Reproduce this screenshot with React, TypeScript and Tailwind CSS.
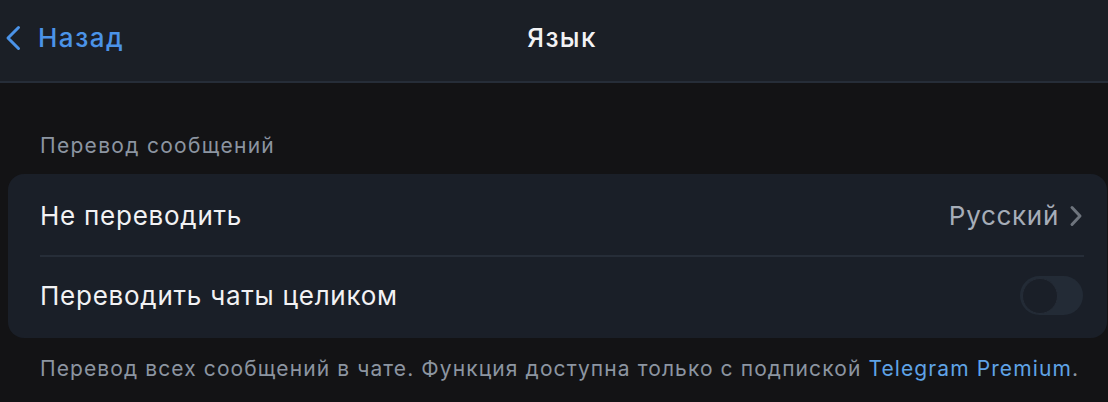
import React, { useState } from 'react';

const font = { fontFamily: 'Inter, "Noto Sans", sans-serif' };

function Toggle({ on, onChange }: { on: boolean; onChange: (v: boolean) => void }) {
  return (
    <button
      onClick={() => onChange(!on)}
      className={`relative h-[39px] w-[63px] shrink-0 rounded-full ${on ? 'bg-[#3e88f7]' : 'bg-[#232b36]'}`}
    >
      <span
        className={`absolute top-[1.5px] h-[36px] w-[36px] rounded-full border border-[#252c37] bg-[#1a1f28] ${on ? 'left-[25px]' : 'left-[1.5px]'}`}
      />
    </button>
  );
}

export default function App() {
  const [whole, setWhole] = useState(false);

  return (
    <div className="min-h-[402px] w-full bg-[#131315] text-[#f2f2f4]" style={font}>
      {/* Header */}
      <div className="relative flex h-[83px] items-center border-b-2 border-[#262d38] bg-[#1b1f26]">
        <button className="flex items-center pb-[6px] pl-[5px] text-[#4b93e8]">
          <svg width="17" height="26" viewBox="0 0 17 26" fill="none">
            <path d="M13.5 2.5 3 13l10.5 10.5" stroke="currentColor" strokeWidth="3" strokeLinecap="round" strokeLinejoin="round" />
          </svg>
          <span className="ml-[16px] text-[26px] font-medium tracking-[1.5px]">Назад</span>
        </button>
        <div className="absolute inset-x-0 top-[18px] pl-[16px] text-center text-[26px] font-medium tracking-[1.3px]">Язык</div>
      </div>

      {/* Section */}
      <div className="pt-[50px]">
        <div className="pb-[15px] pl-[40px] text-[21px] leading-[26px] tracking-[1.3px] text-[#8c95a1]">Перевод сообщений</div>
        <div className="ml-[8px] mr-px rounded-[16px] bg-[#1a1f28]">
          <div className="flex h-[81px] items-center justify-between pl-[32px] pr-[24px] pt-[2px]">
            <span className="text-[26px] tracking-[0.75px]">Не переводить</span>
            <div className="flex items-center gap-[10px]">
              <span className="text-[26px] tracking-[0.7px] text-[#a6adb8]">Русский</span>
              <svg width="14" height="22" viewBox="0 0 14 22" fill="none">
                <path d="M3 2.5 11 11l-8 8.5" stroke="#6e747d" strokeWidth="3" strokeLinecap="round" strokeLinejoin="round" />
              </svg>
            </div>
          </div>
          <div className="ml-[32px] mr-[23px] h-[2px] bg-[#262d38]" />
          <div className="flex h-[81px] items-center justify-between pb-[4px] pl-[32px] pr-[24px]">
            <span className="text-[26px] tracking-[0.75px]">Переводить чаты целиком</span>
            <Toggle on={whole} onChange={setWhole} />
          </div>
        </div>
        <div className="pl-[40px] pt-[18px] text-[21px] leading-[26px] tracking-[1.1px] text-[#8c95a1]">
          Перевод всех сообщений в чате. Функция доступна только с подпиской{' '}
          <span className="text-[#5fa3e6]">Telegram Premium</span>.
        </div>
      </div>
    </div>
  );
}
